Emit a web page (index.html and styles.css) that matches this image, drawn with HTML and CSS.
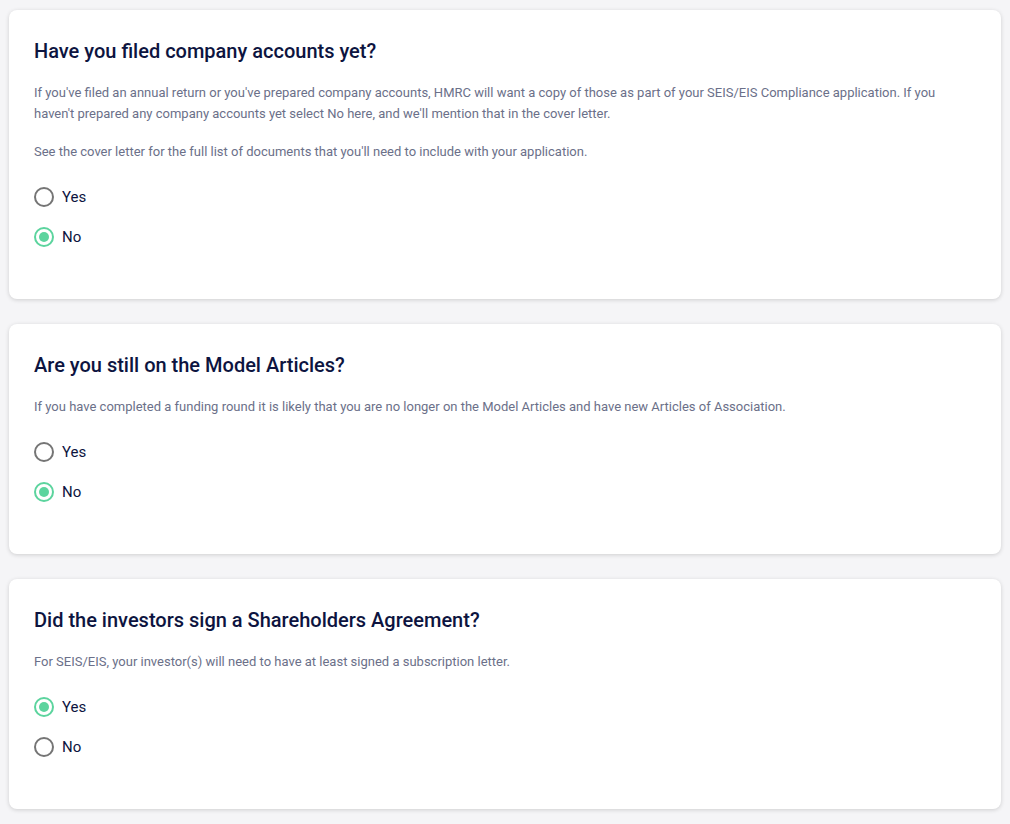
FILE: index.html
```html
<!DOCTYPE html>
<html>
<head>
<meta charset="utf-8">
<link rel="stylesheet" href="styles.css">
</head>
<body>
<main class="page">
  <section class="card">
    <h2 class="title">Have you filed company accounts yet?</h2>
    <p class="desc">If you've filed an annual return or you've prepared company accounts, HMRC will want a copy of those as part of your SEIS/EIS Compliance application. If you haven't prepared any company accounts yet select No here, and we'll mention that in the cover letter.</p>
    <p class="desc">See the cover letter for the full list of documents that you'll need to include with your application.</p>
    <div class="options">
      <label class="option"><span class="radio"></span><span class="label">Yes</span></label>
      <label class="option"><span class="radio checked"></span><span class="label">No</span></label>
    </div>
  </section>
  <section class="card">
    <h2 class="title">Are you still on the Model Articles?</h2>
    <p class="desc">If you have completed a funding round it is likely that you are no longer on the Model Articles and have new Articles of Association.</p>
    <div class="options">
      <label class="option"><span class="radio"></span><span class="label">Yes</span></label>
      <label class="option"><span class="radio checked"></span><span class="label">No</span></label>
    </div>
  </section>
  <section class="card">
    <h2 class="title">Did the investors sign a Shareholders Agreement?</h2>
    <p class="desc">For SEIS/EIS, your investor(s) will need to have at least signed a subscription letter.</p>
    <div class="options">
      <label class="option"><span class="radio checked"></span><span class="label">Yes</span></label>
      <label class="option"><span class="radio"></span><span class="label">No</span></label>
    </div>
  </section>
</main>
</body>
</html>
```
FILE: styles.css
```css
html, body {
  margin: 0;
  padding: 0;
  background: #f5f5f7;
  font-family: Roboto, "Liberation Sans", sans-serif;
}
.page {
  display: flex;
  flex-direction: column;
  gap: 25px;
  padding: 10px 9px 20px 9px;
}
.card {
  background: #ffffff;
  border-radius: 8px;
  box-shadow: 0 1px 4px rgba(0, 0, 0, 0.16);
  padding: 29px 25px 50px 25px;
}
.title {
  margin: 0;
  font-size: 20px;
  line-height: 24px;
  font-weight: 500;
  color: #0d1440;
}
.desc {
  margin: 19px 0 0 0;
  font-size: 13px;
  line-height: 21px;
  color: #6b7089;
}
.desc + .desc {
  margin-top: 17px;
}
.options {
  display: flex;
  flex-direction: column;
  gap: 16px;
  margin-top: 23px;
}
.option {
  display: flex;
  align-items: center;
  gap: 8px;
  height: 24px;
}
.radio {
  width: 20px;
  height: 20px;
  box-sizing: border-box;
  border: 2px solid #757575;
  border-radius: 50%;
  display: inline-flex;
  align-items: center;
  justify-content: center;
}
.radio.checked {
  border-color: #5cd49e;
}
.radio.checked::after {
  content: "";
  width: 10px;
  height: 10px;
  border-radius: 50%;
  background: #5cd49e;
}
.label {
  font-size: 15px;
  color: #0d1440;
}
```
